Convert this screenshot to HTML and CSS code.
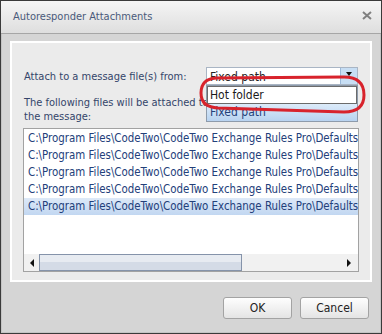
FILE: index.html
```html
<!DOCTYPE html>
<html lang="en">
<head>
    <meta charset="utf-8"/>
    <title>Autoresponder Attachments</title>
    <link rel="stylesheet" href="styles.css">
</head>
<body>
<div class="dialog">
    <div class="titlebar">
        <span class="title">Autoresponder Attachments</span>
        <svg class="close" width="10" height="9" viewBox="0 0 10 9">
            <path d="M1 1 L9 8 M9 1 L1 8" stroke="#808080" stroke-width="2"/>
        </svg>
    </div>

    <div class="dialog-body">
        <div class="panel">
            <div class="source-row">
                <span class="label">Attach to a message file(s) from:</span>
                <div class="combo">
                    <span class="combo-value">Fixed path</span>
                    <span class="combo-button"><i class="arrow-down"></i></span>
                    <ul class="combo-list">
                        <li class="hover">Hot folder</li>
                        <li class="selected">Fixed path</li>
                    </ul>
                </div>
            </div>

            <p class="files-label">The following files will be attached to the message:</p>

            <div class="listbox">
                <ul class="files">
                    <li>C:\Program Files\CodeTwo\CodeTwo Exchange Rules Pro\Defaults\Attachment1.txt</li>
                    <li>C:\Program Files\CodeTwo\CodeTwo Exchange Rules Pro\Defaults\Attachment2.txt</li>
                    <li>C:\Program Files\CodeTwo\CodeTwo Exchange Rules Pro\Defaults\Attachment3.txt</li>
                    <li>C:\Program Files\CodeTwo\CodeTwo Exchange Rules Pro\Defaults\Attachment4.txt</li>
                    <li class="selected">C:\Program Files\CodeTwo\CodeTwo Exchange Rules Pro\Defaults\Attachment5.txt</li>
                </ul>
                <div class="hscroll">
                    <i class="arrow-left"></i>
                    <div class="track"><div class="thumb"></div></div>
                    <i class="arrow-right"></i>
                </div>
            </div>
        </div>

        <div class="buttons">
            <button type="button">OK</button>
            <button type="button">Cancel</button>
        </div>
    </div>

    <!-- red marker drawn over the screenshot -->
    <svg class="marker" width="382" height="334" viewBox="0 0 382 334">
        <path d="M216 78 L344 77 Q364 77 364 95 Q364 112 344 112 L218 108 Q201 107 201 93 Q201 79 216 78 Z"
              fill="none" stroke="#d8232c" stroke-width="3"/>
    </svg>
</div>
</body>
</html>
```

FILE: styles.css
```css
html, body {
    margin: 0;
    padding: 0;
}

.dialog {
    position: relative;
    width: 382px;
    height: 334px;
    box-sizing: border-box;
    border: 1px solid #3a3a3a;
    background: #d5d5d5;
    box-shadow: inset 1px 0 0 #c4c4c4, inset -1px 0 0 #c4c4c4, inset 0 -1px 0 #c4c4c4;
    font-family: "DejaVu Sans Condensed", "DejaVu Sans", sans-serif;
    font-size: 11px;
    color: #34456a;
}

.titlebar {
    display: flex;
    align-items: center;
    justify-content: space-between;
    height: 32px;
    padding: 0 9px 0 12px;
    border-bottom: 1px solid #a6a6a6;
    background: linear-gradient(#f5f5f5, #dedede);
}

.title {
    font-size: 11px;
    color: #4a5a7a;
    margin-top: -1px;
}

.close {
    margin-top: -4px;
}

.dialog-body {
    padding: 7px 9px 0 9px;
}

.panel {
    height: 237px;
    border: 2px solid #fff;
    background: #ebebeb;
    padding: 0 11px;
}

.source-row {
    display: flex;
    align-items: center;
    justify-content: space-between;
    padding-top: 24px;
}

.label {
    padding-left: 1px;
}

.combo {
    position: relative;
    display: flex;
    width: 152px;
    height: 18px;
    margin-right: 1px;
    box-sizing: border-box;
    border: 1px solid #a9b5c4;
    background: #fff;
}

.combo-value {
    flex: 1;
    padding: 2px 3px;
    font-size: 12px;
    color: #222;
}

.combo-button {
    width: 16px;
    display: flex;
    justify-content: center;
    background: #c7def4;
    border-left: 1px solid #9bb9da;
}

.arrow-down {
    margin-top: 4px;
    border-left: 3px solid transparent;
    border-right: 3px solid transparent;
    border-top: 4px solid #111;
    height: 0;
}

.combo-list {
    position: absolute;
    top: 17px;
    left: -1px;
    right: -1px;
    margin: 0;
    padding: 0;
    list-style: none;
    border: 1px solid #8e9bab;
    background: #fff;
    font-size: 12px;
    color: #1a1a1a;
}

.combo-list li {
    height: 17px;
    line-height: 17px;
    padding-left: 3px;
}

.combo-list li.hover {
    height: 18px;
    line-height: 18px;
    outline: 1px solid #6b6b6b;
    outline-offset: -1px;
}

.combo-list li.selected {
    background: linear-gradient(#dcebfa, #b8d3f0);
    color: #24427a;
}

.files-label {
    width: 196px;
    margin: 11px 0 0 1px;
    line-height: 14px;
}

.listbox {
    margin-top: 4px;
    height: 144px;
    box-sizing: border-box;
    border: 1px solid #a2a2a2;
    background: #fff;
    display: flex;
    flex-direction: column;
    overflow: hidden;
}

.files {
    flex: 1;
    margin: 0;
    padding: 1px 0 0 0;
    list-style: none;
    font-size: 11.4px;
    color: #23407a;
}

.files li {
    height: 17px;
    line-height: 17px;
    padding-left: 4px;
    white-space: nowrap;
    overflow: hidden;
}

.files li.selected {
    background: linear-gradient(#dde9f8, #c2d7f1);
}

.hscroll {
    display: flex;
    align-items: center;
    height: 17px;
    background: #f1f1f1;
}

.arrow-left,
.arrow-right {
    width: 0;
    height: 0;
    border-top: 4px solid transparent;
    border-bottom: 4px solid transparent;
}

.arrow-left {
    margin: 0 5px 0 6px;
    border-right: 4px solid #111;
}

.arrow-right {
    margin: 0 7px 0 6px;
    border-left: 4px solid #111;
}

.track {
    flex: 1;
    height: 17px;
}

.thumb {
    width: 201px;
    height: 15px;
    border: 1px solid #8593aa;
    background: linear-gradient(#e7ebf1 50%, #d4dbe6 50%);
}

.buttons {
    display: flex;
    justify-content: flex-end;
    gap: 8px;
    padding: 15px 3px 0 0;
}

.buttons button {
    width: 69px;
    height: 22px;
    border: 1px solid #a3a3a3;
    border-radius: 3px;
    background: linear-gradient(#fefefe, #e4e4e4);
    font-family: "DejaVu Sans Condensed", "DejaVu Sans", sans-serif;
    font-size: 12px;
    color: #222;
    padding: 0;
}

.marker {
    position: absolute;
    top: -1px;
    left: -1px;
    pointer-events: none;
}
```
